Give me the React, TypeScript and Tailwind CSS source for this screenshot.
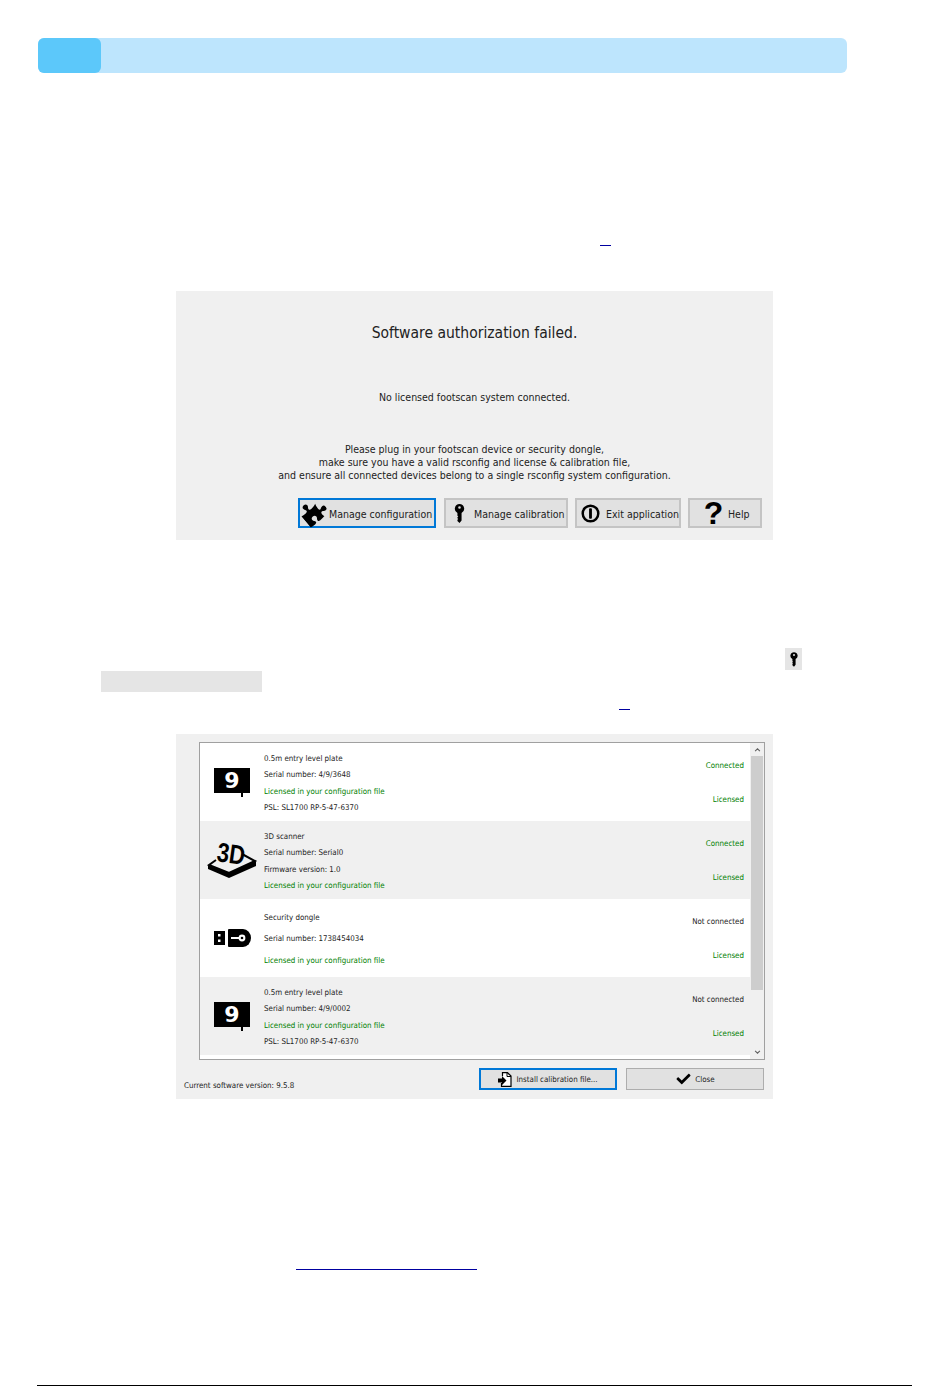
import { FaCheck, FaPuzzlePiece } from 'react-icons/fa';

const GREEN = 'text-[#008000]';

function KeyIcon({ className }: { className: string }) {
  return (
    <svg viewBox="0 0 12 22" className={className}>
      <path
        fillRule="evenodd"
        d="M6 0a5.500 5.500 0 0 1 2.400 10.400V19l-2.400 3-2.400-2.400v-1.400l1-.8-1-.9v-1.200l1-.8-1-.9v-3.200A5.500 5.500 0 0 1 6 0zm0 2.600a1.500 1.500 0 1 0 0 3 1.500 1.500 0 0 0 0-3z"
      />
    </svg>
  );
}

function ExitIcon() {
  return (
    <svg viewBox="0 0 20 20" className="h-[19px] w-[19px] shrink-0">
      <circle cx="10" cy="10" r="8.200" fill="none" stroke="black" strokeWidth="2.600" />
      <rect x="8.500" y="4.500" width="3" height="11" rx="1" />
    </svg>
  );
}

function PlateIcon() {
  return (
    <svg viewBox="0 0 36 29" className="h-[29px] w-[36px]">
      <rect width="36" height="25" />
      <rect x="27" y="24" width="2" height="5" />
      <text x="18" y="20" textAnchor="middle" fill="white" fontSize="22" fontWeight="700" fontFamily="'DejaVu Sans', sans-serif">
        9
      </text>
    </svg>
  );
}

function ScannerIcon() {
  return (
    <svg viewBox="0 0 49 38" className="h-[38px] w-[49px] overflow-visible">
      <path d="M8 19 1 24l20 8 26-12-13-7" fill="none" stroke="black" strokeWidth="2" />
      <path d="M0 24v4l21 9 27-12v-5L21 32z" />
      <text
        x="8"
        y="20"
        fontSize="27"
        fontWeight="700"
        fontFamily="'Liberation Sans', sans-serif"
        textLength="28"
        lengthAdjust="spacingAndGlyphs"
        transform="rotate(8 8 20)"
      >
        3D
      </text>
    </svg>
  );
}

function DongleIcon() {
  return (
    <svg viewBox="0 0 37 18" className="h-[18px] w-[37px]">
      <path d="M0 2h11v14H0z" />
      <rect x="4" y="5" width="2.500" height="2.500" fill="white" />
      <rect x="4" y="10.500" width="2.500" height="2.500" fill="white" />
      <path d="M14 1a1 1 0 0 1 1-1h14a8 9 0 0 1 0 18H15a1 1 0 0 1-1-1z" />
      <circle cx="28" cy="9" r="3.400" fill="white" />
      <rect x="17" y="8" width="9" height="2" fill="white" />
      <circle cx="28" cy="9" r="1.300" />
    </svg>
  );
}

function FileInIcon() {
  return (
    <svg viewBox="0 0 14 15" className="h-[15px] w-[14px]">
      <path d="M4.500 4V.7h5L13 4v10.300H3.500V11" fill="white" stroke="black" strokeWidth="1.200" />
      <path d="M9 1v3.500h4" fill="none" stroke="black" />
      <path d="M0 6.500h4V4l4.500 4.500L4 13v-2.500H0z" />
    </svg>
  );
}

type Device = {
  icon: 'plate' | 'scanner' | 'dongle';
  lines: { text: string; green?: boolean }[];
  connected: boolean;
  shaded: boolean;
};

const devices: Device[] = [
  {
    icon: 'plate',
    shaded: false,
    connected: true,
    lines: [
      { text: '0.5m entry level plate' },
      { text: 'Serial number: 4/9/3648' },
      { text: 'Licensed in your configuration file', green: true },
      { text: 'PSL: SL1700 RP-5-47-6370' },
    ],
  },
  {
    icon: 'scanner',
    shaded: true,
    connected: true,
    lines: [
      { text: '3D scanner' },
      { text: 'Serial number: Serial0' },
      { text: 'Firmware version: 1.0' },
      { text: 'Licensed in your configuration file', green: true },
    ],
  },
  {
    icon: 'dongle',
    shaded: false,
    connected: false,
    lines: [
      { text: 'Security dongle' },
      { text: 'Serial number: 1738454034' },
      { text: 'Licensed in your configuration file', green: true },
    ],
  },
  {
    icon: 'plate',
    shaded: true,
    connected: false,
    lines: [
      { text: '0.5m entry level plate' },
      { text: 'Serial number: 4/9/0002' },
      { text: 'Licensed in your configuration file', green: true },
      { text: 'PSL: SL1700 RP-5-47-6370' },
    ],
  },
];

function DeviceRow({ device }: { device: Device }) {
  return (
    <div className={`flex h-[78px] shrink-0 ${device.shaded ? 'bg-[#f0f0f0]' : 'bg-white'}`}>
      <div className="flex w-[64px] shrink-0 items-center justify-center">
        {device.icon === 'plate' && <PlateIcon />}
        {device.icon === 'scanner' && <ScannerIcon />}
        {device.icon === 'dongle' && <DongleIcon />}
      </div>
      <div className="flex flex-1 flex-col justify-around pb-[5px] pt-[8px]">
        {device.lines.map((line) => (
          <div key={line.text} className={`leading-[12px] ${line.green ? GREEN : ''}`}>
            {line.text}
          </div>
        ))}
      </div>
      <div className="flex flex-col justify-around pb-[4px] pr-[6px] pt-[6px] text-right">
        <div className={`leading-[12px] ${device.connected ? GREEN : ''}`}>
          {device.connected ? 'Connected' : 'Not connected'}
        </div>
        <div className={`leading-[12px] ${GREEN}`}>Licensed</div>
      </div>
    </div>
  );
}

function AuthButton({
  width,
  focused,
  children,
}: {
  width: string;
  focused?: boolean;
  children: React.ReactNode;
}) {
  return (
    <div
      className={`flex h-[30px] items-center bg-[#e1e1e1] ${width} ${
        focused ? 'border-2 border-[#0078d7]' : 'border-2 border-[#c4c4c4]'
      }`}
    >
      {children}
    </div>
  );
}

export default function App() {
  return (
    <div className="flex h-[1398px] w-[950px] flex-col overflow-hidden bg-white font-['DejaVu_Sans_Condensed','Roboto',sans-serif] text-[#222]">
      <div className="ml-[38px] mt-[38px] flex h-[35px] w-[809px] rounded-md bg-[#bde5fd]">
        <div className="w-[63px] rounded-md bg-[#5cc8fa]" />
      </div>

      <div className="ml-[600px] mt-[172px] h-px w-[11px] bg-[#0000a0]" />

      <div className="ml-[176px] mt-[45px] flex h-[249px] w-[597px] flex-col items-center bg-[#f0f0f0] pt-[32px] text-center text-[10.500px]">
        <div className="text-[15.500px] leading-[20px]">Software authorization failed.</div>
        <div className="mt-[48px] leading-[13px]">No licensed footscan system connected.</div>
        <div className="mt-[39px] leading-[13px]">
          <div>Please plug in your footscan device or security dongle,</div>
          <div>make sure you have a valid rsconfig and license &amp; calibration file,</div>
          <div>and ensure all connected devices belong to a single rsconfig system configuration.</div>
        </div>
        <div className="mt-[16px] flex w-full gap-[7px] pl-[122px]">
          <AuthButton width="w-[138px]" focused>
            <FaPuzzlePiece className="-mt-[4px] ml-[1px] h-[25px] w-[25px] shrink-0 -rotate-[40deg] text-black" />
            <span className="ml-[3px] mt-[3px] whitespace-nowrap">Manage configuration</span>
          </AuthButton>
          <AuthButton width="ml-px w-[124px]">
            <KeyIcon className="ml-[8px] h-[19px] w-[11px] shrink-0" />
            <span className="ml-[9px] mt-[3px] whitespace-nowrap">Manage calibration</span>
          </AuthButton>
          <AuthButton width="w-[106px]">
            <div className="ml-[4px]">
              <ExitIcon />
            </div>
            <span className="ml-[6px] mt-[3px] whitespace-nowrap">Exit application</span>
          </AuthButton>
          <AuthButton width="w-[74px]">
            <span className="ml-[13px] w-[21px] text-center font-['Liberation_Sans',sans-serif] text-[32px] font-bold leading-[26px] text-black">
              ?
            </span>
            <span className="ml-[4px] mt-[3px]">Help</span>
          </AuthButton>
        </div>
      </div>

      <div className="ml-[785px] mt-[108px] flex h-[22px] w-[17px] items-center justify-center bg-[#e5e5e5]">
        <KeyIcon className="h-[15px] w-[8px]" />
      </div>
      <div className="ml-[101px] mt-px h-[21px] w-[161px] bg-[#e5e5e5]" />
      <div className="ml-[619px] mt-[17px] h-px w-[11px] bg-[#0000a0]" />

      <div className="ml-[176px] mt-[24px] flex h-[365px] w-[597px] flex-col bg-[#f0f0f0] text-[7.900px]">
        <div className="ml-[23px] mt-[8px] flex h-[318px] w-[566px] border border-[#a0a0a0] bg-white">
          <div className="flex flex-1 flex-col">
            {devices.map((device, i) => (
              <DeviceRow key={i} device={device} />
            ))}
          </div>
          <div className="flex w-[14px] shrink-0 flex-col items-center bg-[#f0f0f0]">
            <svg viewBox="0 0 8 5" className="mt-[5px] h-[4px] w-[7px]">
              <path d="M1 4l3-3 3 3" fill="none" stroke="#606060" strokeWidth="1.300" />
            </svg>
            <div className="mt-[4px] h-[234px] w-[12px] bg-[#cdcdcd]" />
            <div className="flex-1" />
            <svg viewBox="0 0 8 5" className="mb-[5px] h-[4px] w-[7px]">
              <path d="M1 1l3 3 3-3" fill="none" stroke="#606060" strokeWidth="1.300" />
            </svg>
          </div>
        </div>
        <div className="mt-[8px] flex">
          <div className="ml-[8px] mt-[12px] w-[295px] leading-[12px]">Current software version: 9.5.8</div>
          <div className="flex h-[22px] w-[138px] items-center justify-center gap-[4px] border-2 border-[#0078d7] bg-[#e1e1e1]">
            <FileInIcon />
            <span className="mt-[2px]">Install calibration file...</span>
          </div>
          <div className="ml-[9px] flex h-[22px] w-[138px] items-center justify-center gap-[3px] border border-[#adadad] bg-[#e1e1e1]">
            <FaCheck className="h-[14px] w-[17px] text-black" />
            <span className="mt-[2px]">Close</span>
          </div>
        </div>
      </div>

      <div className="ml-[296px] mt-[170px] h-px w-[181px] bg-[#0000a0]" />
      <div className="ml-[37px] mt-[115px] h-px w-[875px] bg-black" />
    </div>
  );
}
